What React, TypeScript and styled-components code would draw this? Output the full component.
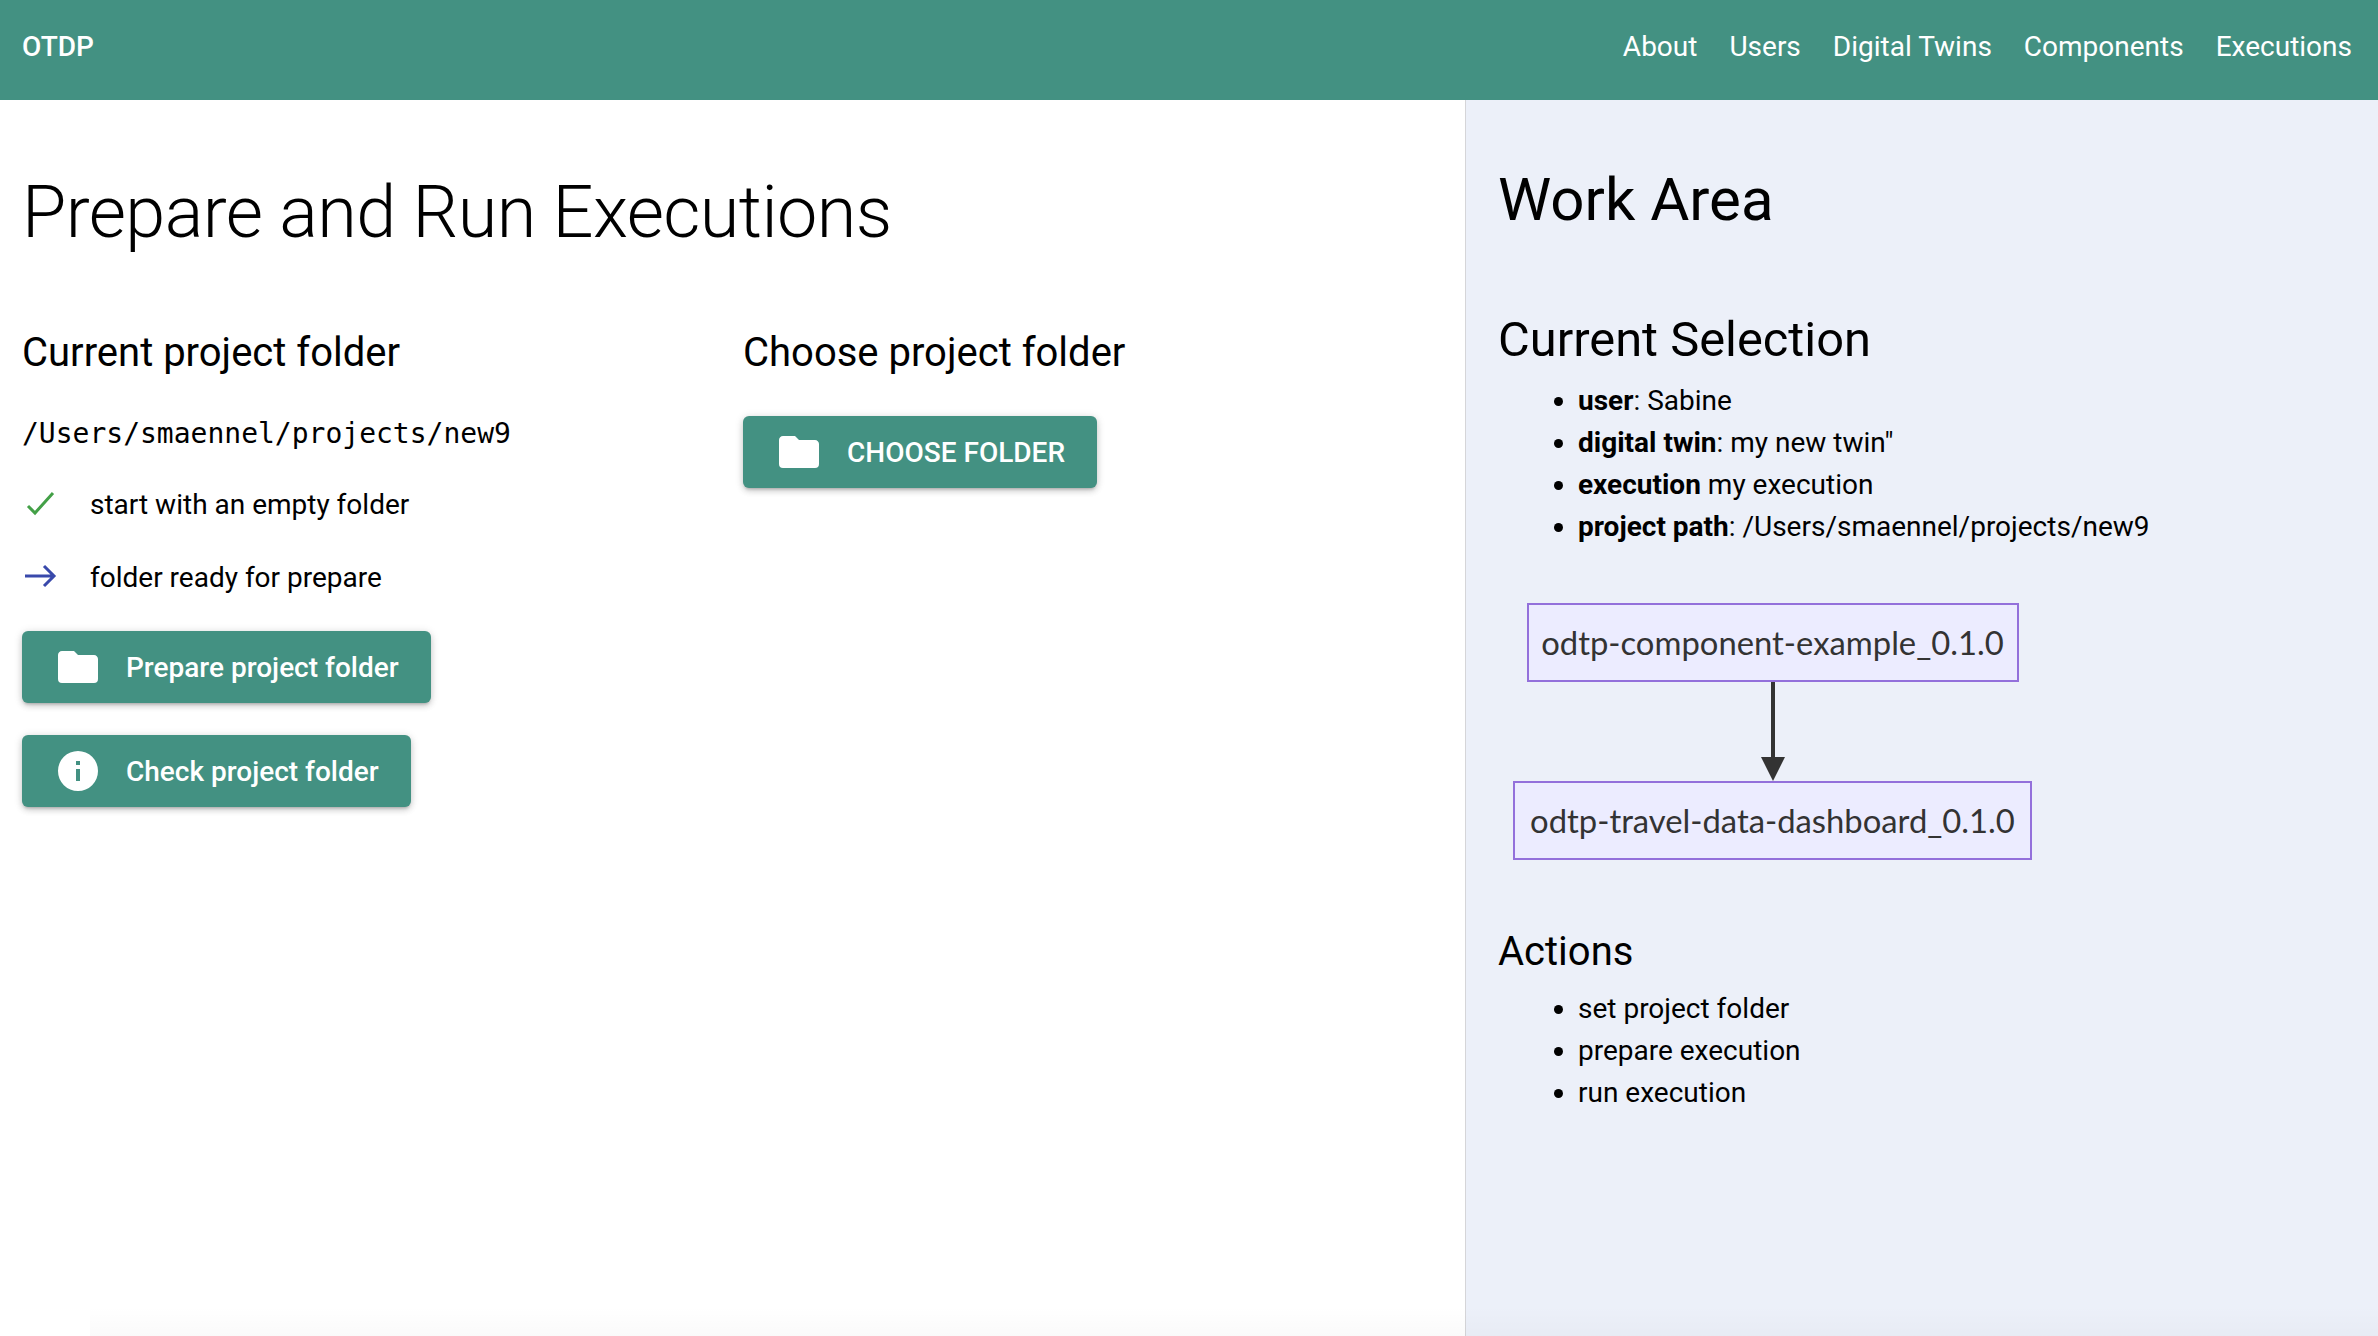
import styled, { createGlobalStyle } from 'styled-components';

const GlobalStyle = createGlobalStyle`
  html, body {
    margin: 0;
    height: 100%;
    background: #fff;
    font-family: Roboto, "Liberation Sans", sans-serif;
    color: #000;
  }
`;

const Page = styled.div`
  position: relative;
  display: flex;
  flex-direction: column;
  height: 1336px;
  overflow: hidden;

  &::after {
    content: '';
    position: absolute;
    left: 90px;
    right: 0;
    bottom: 0;
    height: 30px;
    background: linear-gradient(to bottom, rgba(0, 0, 0, 0), rgba(0, 0, 0, 0.02));
    pointer-events: none;
  }
`;

const TopBar = styled.header`
  flex: none;
  height: 100px;
  display: flex;
  align-items: center;
  justify-content: space-between;
  padding: 0 26px 8px 22px;
  box-sizing: border-box;
  background: #439182;
  color: #fff;
`;

const Brand = styled.div`
  font-size: 28px;
  font-weight: 500;
`;

const Nav = styled.nav`
  display: flex;
  gap: 32px;
`;

const NavLink = styled.a`
  font-size: 28px;
  color: #fff;
`;

const Body = styled.div`
  flex: 1;
  display: flex;
  min-height: 0;
`;

const Main = styled.main`
  width: 1465px;
  flex: none;
  box-sizing: border-box;
  padding: 65px 22px 0;
`;

const Title = styled.h1`
  margin: 0 0 64px;
  font-size: 72px;
  line-height: 96px;
  font-weight: 300;
  letter-spacing: -0.6px;
`;

const Columns = styled.div`
  display: grid;
  grid-template-columns: 721px 1fr;
`;

const Column = styled.section`
  display: flex;
  flex-direction: column;
  align-items: flex-start;
`;

const SectionTitle = styled.h2`
  margin: 0 0 35px;
  font-size: 40px;
  line-height: 56px;
  font-weight: 400;
`;

const PathText = styled.code`
  font-family: "DejaVu Sans Mono", monospace;
  font-size: 28px;
  line-height: 36px;
  margin-bottom: 32px;
`;

const CheckList = styled.div`
  display: flex;
  flex-direction: column;
  gap: 33px;
  margin-bottom: 34px;
`;

const CheckRow = styled.div`
  display: flex;
  align-items: center;
  gap: 29px;
  height: 40px;
  font-size: 28px;
`;

const StatusIcon = styled.svg`
  width: 36px;
  height: 30px;
  margin-left: 3px;
`;

const Actions = styled.div`
  display: flex;
  flex-direction: column;
  align-items: flex-start;
  gap: 32px;
`;

const ActionButton = styled.button<{ $upper?: boolean }>`
  display: flex;
  align-items: center;
  gap: 24px;
  height: 72px;
  padding: 0 32px;
  border: 0;
  border-radius: 6px;
  background: #439182;
  color: #fff;
  font-family: inherit;
  font-size: 28px;
  font-weight: 500;
  text-transform: ${(p) => (p.$upper ? 'uppercase' : 'none')};
  box-shadow: 0 3px 3px -2px rgba(0, 0, 0, 0.2), 0 3px 6px 0 rgba(0, 0, 0, 0.14), 0 1px 10px 0 rgba(0, 0, 0, 0.12);
`;

const ButtonIcon = styled.svg`
  width: 48px;
  height: 48px;
  fill: #fff;
`;

const Side = styled.aside`
  flex: 1;
  box-sizing: border-box;
  padding: 58px 32px 0;
  background: #ecf0f9;
  border-left: 1px solid #d5d5d8;
`;

const SideTitle = styled.h2`
  margin: 0 0 66px;
  font-size: 60px;
  line-height: 84px;
  font-weight: 400;
`;

const SideHeading = styled.h3`
  margin: 0 0 8px;
  font-size: 48.8px;
  line-height: 64px;
  font-weight: 400;
`;

const ActionsHeading = styled.h4`
  margin: 64px 0 8px;
  font-size: 40px;
  line-height: 56px;
  font-weight: 400;
`;

const Bullets = styled.ul`
  margin: 0;
  padding-left: 80px;
  font-size: 28px;
  line-height: 42px;
`;

const Graph = styled.div`
  display: inline-flex;
  flex-direction: column;
  align-items: center;
  margin: 55px 0 0 15px;
`;

const GraphNode = styled.div<{ $width: number }>`
  box-sizing: border-box;
  width: ${(p) => p.$width}px;
  height: 79px;
  display: flex;
  align-items: center;
  justify-content: center;
  border: 2px solid #9370db;
  background: #ececff;
  color: #333;
  font-family: Lato, sans-serif;
  font-size: 32.8px;
`;

const GraphEdge = styled.svg`
  display: block;
  width: 26px;
  height: 99px;
`;

const folderPath =
  'M10,4H4C2.89,4 2,4.89 2,6V18A2,2 0 0,0 4,20H20A2,2 0 0,0 22,18V8C22,6.89 21.1,6 20,6H12L10,4Z';
const infoPath =
  'M13,9H11V7H13M13,17H11V11H13M12,2A10,10 0 0,0 2,12A10,10 0 0,0 12,22A10,10 0 0,0 22,12A10,10 0 0,0 12,2Z';

const navItems = ['About', 'Users', 'Digital Twins', 'Components', 'Executions'];

export default function App() {
  return (
    <>
      <GlobalStyle />
      <Page>
        <TopBar>
          <Brand>OTDP</Brand>
          <Nav>
            {navItems.map((item) => (
              <NavLink key={item}>{item}</NavLink>
            ))}
          </Nav>
        </TopBar>
        <Body>
          <Main>
            <Title>Prepare and Run Executions</Title>
            <Columns>
              <Column>
                <SectionTitle>Current project folder</SectionTitle>
                <PathText>/Users/smaennel/projects/new9</PathText>
                <CheckList>
                  <CheckRow>
                    <StatusIcon viewBox="0 0 36 30" fill="none" stroke="#43a047" strokeWidth="3">
                      <path d="M3 17 L10 24 L28 4" />
                    </StatusIcon>
                    start with an empty folder
                  </CheckRow>
                  <CheckRow>
                    <StatusIcon viewBox="0 0 36 30" fill="none" stroke="#3949ab" strokeWidth="3">
                      <path d="M-1 14 H29 M19 4 L29 14 L19 24" />
                    </StatusIcon>
                    folder ready for prepare
                  </CheckRow>
                </CheckList>
                <Actions>
                  <ActionButton>
                    <ButtonIcon viewBox="0 0 24 24">
                      <path d={folderPath} />
                    </ButtonIcon>
                    Prepare project folder
                  </ActionButton>
                  <ActionButton>
                    <ButtonIcon viewBox="0 0 24 24">
                      <path d={infoPath} />
                    </ButtonIcon>
                    Check project folder
                  </ActionButton>
                </Actions>
              </Column>
              <Column>
                <SectionTitle>Choose project folder</SectionTitle>
                <ActionButton $upper>
                  <ButtonIcon viewBox="0 0 24 24">
                    <path d={folderPath} />
                  </ButtonIcon>
                  Choose folder
                </ActionButton>
              </Column>
            </Columns>
          </Main>
          <Side>
            <SideTitle>Work Area</SideTitle>
            <SideHeading>Current Selection</SideHeading>
            <Bullets>
              <li>
                <b>user</b>: Sabine
              </li>
              <li>
                <b>digital twin</b>: my new twin"
              </li>
              <li>
                <b>execution</b> my execution
              </li>
              <li>
                <b>project path</b>: /Users/smaennel/projects/new9
              </li>
            </Bullets>
            <Graph>
              <GraphNode $width={492}>odtp-component-example_0.1.0</GraphNode>
              <GraphEdge viewBox="0 0 26 99">
                <path d="M13 0 V76" stroke="#333" strokeWidth="4" />
                <path d="M1 75 H25 L13 99 Z" fill="#333" />
              </GraphEdge>
              <GraphNode $width={519}>odtp-travel-data-dashboard_0.1.0</GraphNode>
            </Graph>
            <ActionsHeading>Actions</ActionsHeading>
            <Bullets>
              <li>set project folder</li>
              <li>prepare execution</li>
              <li>run execution</li>
            </Bullets>
          </Side>
        </Body>
      </Page>
    </>
  );
}
